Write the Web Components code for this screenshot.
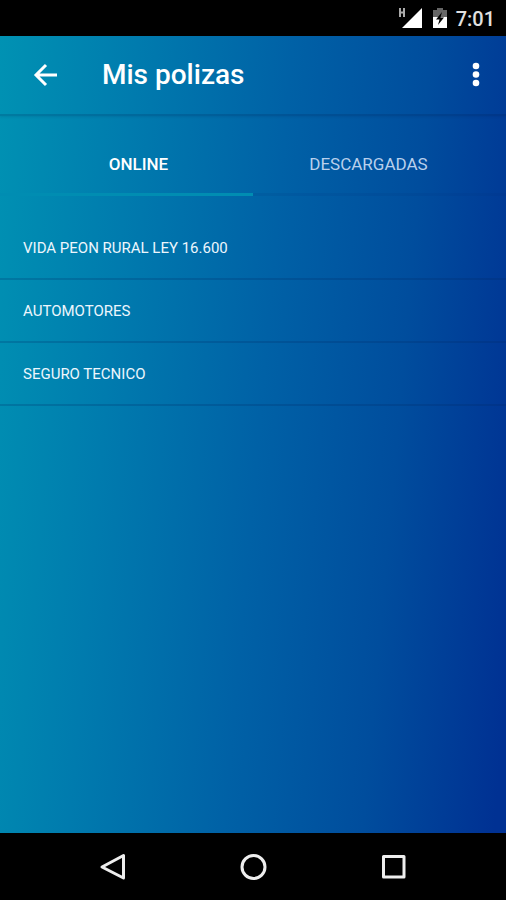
<!DOCTYPE html>
<html lang="es">
<head>
<meta charset="utf-8">
<meta name="viewport" content="width=device-width, initial-scale=1">
<title>Mis polizas</title>
<style>
  html, body { margin: 0; }
  body { font-family: Roboto, "Liberation Sans", sans-serif; color: #fff; background: #000; }
</style>
</head>
<body>
<policy-app>
  <status-bar slot="status">7:01</status-bar>
  <app-bar slot="bar">Mis polizas</app-bar>
  <tab-strip slot="tabs">
    <tab-item selected>ONLINE</tab-item>
    <tab-item>DESCARGADAS</tab-item>
  </tab-strip>
  <policy-list>
    <policy-row>VIDA PEON RURAL LEY 16.600</policy-row>
    <policy-row>AUTOMOTORES</policy-row>
    <policy-row>SEGURO TECNICO</policy-row>
  </policy-list>
  <nav-bar slot="nav"></nav-bar>
</policy-app>
<script>
  const define = (name, html) => customElements.define(name, class extends HTMLElement {
    constructor() {
      super();
      const t = document.createElement('template');
      t.innerHTML = html;
      this.attachShadow({ mode: 'open' }).append(t.content.cloneNode(true));
    }
    connectedCallback() {
      const tab = this.shadowRoot.querySelector('[role=tab]');
      if (tab) tab.setAttribute('aria-selected', this.hasAttribute('selected'));
    }
  });

  define('policy-app', `
    <style>
      :host { display: flex; flex-direction: column; min-height: 100vh; }
      .screen { flex: 1; display: flex; flex-direction: column;
        background: linear-gradient(95deg, #0092b3 0%, #007bae 24%, #0061a6 51%, #004d9d 75%, #003193 98%); }
    </style>
    <slot name="status"></slot>
    <div class="screen">
      <slot name="bar"></slot>
      <slot name="tabs"></slot>
      <main><slot></slot></main>
    </div>
    <slot name="nav"></slot>`);

  define('status-bar', `
    <style>
      :host { display: flex; align-items: center; justify-content: flex-end; height: 36px;
        padding-right: 11px; background: #000; color: #e0e0e0; font-size: 20px; font-weight: 500; line-height: 36px; }
      svg { flex: none; }
      .battery { margin: 0 9px 0 10px; }
      .time { padding-top: 2px; }
    </style>
    <svg width="25" height="22" viewBox="0 0 25 22" aria-hidden="true">
      <path d="M24 1V21H4Z" fill="#fff"/>
      <path d="M1.500 1V11M6.500 1V11M1.500 6H6.500" stroke="#000" stroke-width="4"/>
      <path d="M2 1V10M6 1V10M2 5.500H6" stroke="#aaa" stroke-width="2"/>
    </svg>
    <svg class="battery" width="14" height="22" viewBox="0 0 14 22" aria-hidden="true">
      <path d="M4 1H10V3H14V10H0V3H4Z" fill="#666"/>
      <path d="M0 10H14V21H0Z" fill="#fff"/>
      <path d="M9 5L3 12.500H6.500L5 18L11 10.500H7.500Z" fill="#000"/>
    </svg>
    <span class="time"><slot></slot></span>`);

  define('app-bar', `
    <style>
      :host { display: flex; align-items: center; height: 80px; box-sizing: border-box; padding: 0 13px 0 28px;
        border-bottom: 2px solid rgba(0, 30, 80, .18); box-shadow: 0 1px 2px rgba(0, 30, 80, .12); }
      button { display: grid; place-items: center; width: 34px; height: 48px; margin: 0; padding: 0;
        border: 0; background: none; color: #fff; }
      h1 { flex: 1; margin: 0 0 0 40px; font-size: 28px; line-height: 36px; font-weight: 500; }
    </style>
    <button aria-label="Volver">
      <svg width="26" height="26" viewBox="0 0 26 26" fill="none" stroke="#fff" stroke-width="3" aria-hidden="true">
        <path d="M25 13H4.500M14 3L4 13L14 23"/>
      </svg>
    </button>
    <h1><slot></slot></h1>
    <button aria-label="Más opciones">
      <svg width="8" height="26" viewBox="0 0 8 26" fill="#fff" aria-hidden="true">
        <circle cx="4" cy="4" r="3.300"/><circle cx="4" cy="12.500" r="3.300"/><circle cx="4" cy="21" r="3.300"/>
      </svg>
    </button>`);

  define('tab-strip', `
    <style>
      :host { display: block; }
      div { display: grid; grid-template-columns: 1fr 1fr; padding: 18px 0 21px; }
    </style>
    <div role="tablist"><slot></slot></div>`);

  define('tab-item', `
    <style>
      :host { display: block; }
      button { display: block; width: 100%; height: 62px; margin: 0; padding: 0 0 0 24px; border: 0;
        border-bottom: 3px solid transparent; background: none; color: #b9d0ec; font: inherit; font-size: 17px; line-height: 24px; font-weight: 400; }
      :host(:last-child) button { padding: 0 22px 0 0; border-bottom-color: rgba(0, 50, 120, .12); }
      :host([selected]) button { color: #fff; font-weight: 500; border-bottom-color: #008db2; }
    </style>
    <button role="tab"><slot></slot></button>`);

  define('policy-list', `
    <style>
      :host { display: block; }
    </style>
    <div role="list"><slot></slot></div>`);

  define('policy-row', `
    <style>
      :host { display: block; }
      button { display: block; width: 100%; height: 63px; margin: 0; padding: 0 23px; border: 0;
        border-bottom: 2px solid rgba(0, 40, 100, .22); background: none; color: #edf6fd; text-align: left;
        font: inherit; font-size: 15px; line-height: 20px; }
    </style>
    <div role="listitem"><button><slot></slot></button></div>`);

  define('nav-bar', `
    <style>
      :host { display: block; background: #000; }
      nav { display: flex; justify-content: center; align-items: center; gap: 92px; height: 67px; }
      button { display: grid; place-items: center; width: 48px; height: 48px; margin: 0; padding: 0; border: 0; background: none; }
      svg { fill: none; stroke: #eee; stroke-width: 3; stroke-linejoin: round; }
    </style>
    <nav aria-label="Sistema">
      <button aria-label="Atrás"><svg width="28" height="28" viewBox="0 0 28 28"><path d="M24.500 2.500V25L3 14Z"/></svg></button>
      <button aria-label="Inicio"><svg width="28" height="28" viewBox="0 0 28 28"><circle cx="14.500" cy="14" r="11.500"/></svg></button>
      <button aria-label="Recientes"><svg width="28" height="28" viewBox="0 0 28 28"><path d="M4.500 3.500H25V24H4.500Z"/></svg></button>
    </nav>`);
</script>
</body>
</html>
